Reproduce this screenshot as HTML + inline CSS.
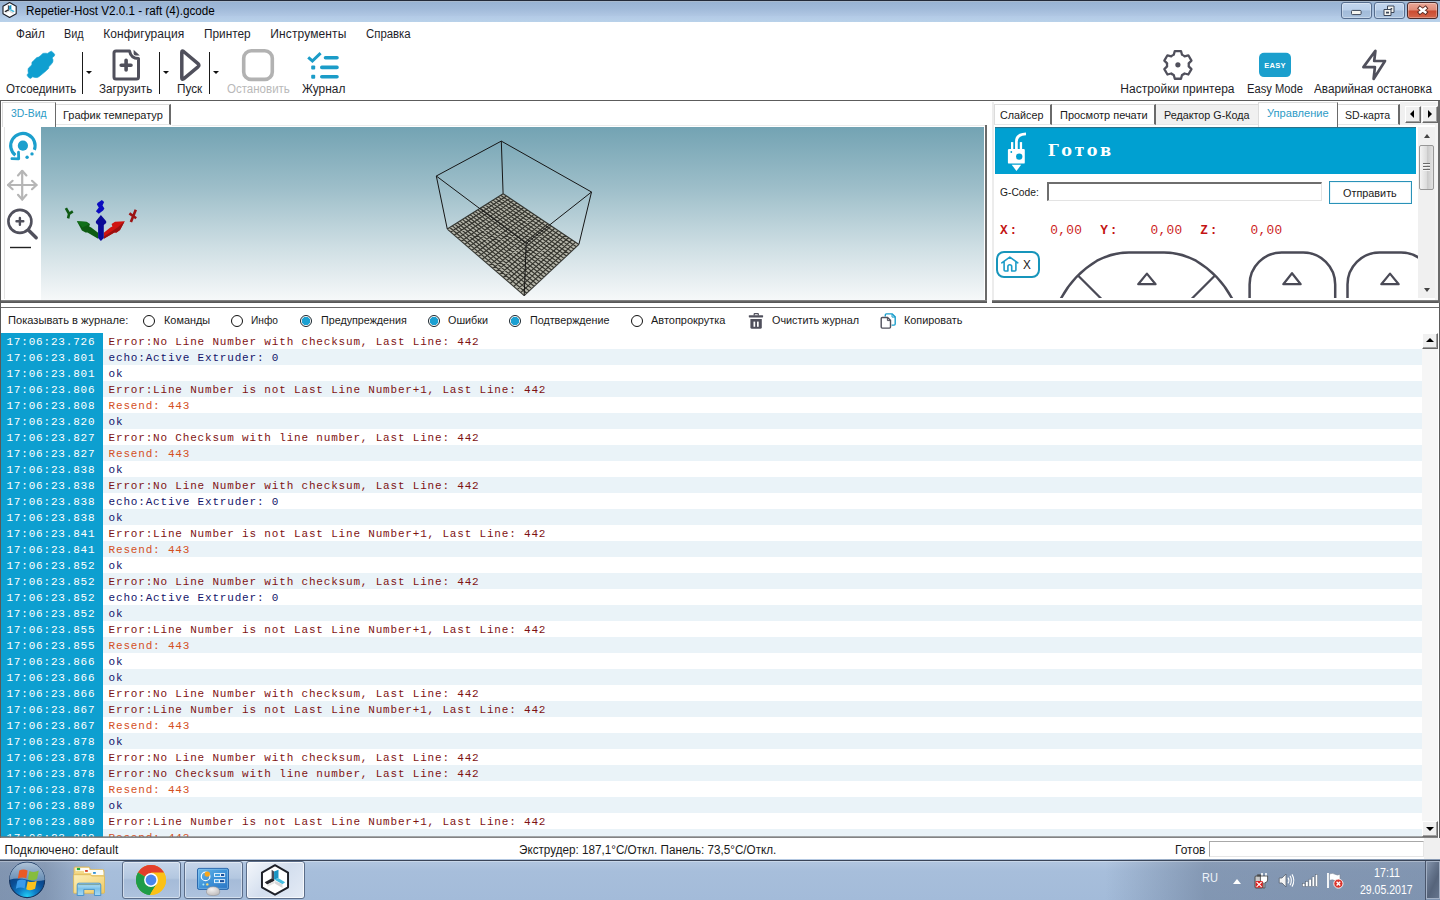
<!DOCTYPE html>
<html lang="ru"><head><meta charset="utf-8"><title>Repetier-Host V2.0.1 - raft (4).gcode</title>
<style>
*{box-sizing:border-box;margin:0;padding:0}
html,body{width:1440px;height:900px;overflow:hidden;background:#fff}
body{position:relative;font-family:"Liberation Sans",sans-serif;font-size:12px;color:#1e1e28}
.a{position:absolute;white-space:nowrap}
svg{position:absolute;overflow:visible}
.fs{font-family:"Liberation Sans",sans-serif}.fm{font-family:"Liberation Mono",monospace}.fd{font-family:"DejaVu Serif","Liberation Serif",serif}
.sx{transform-origin:0 0}
.sep{width:1px;top:52px;height:42px;background:#1a1a1a}
.dd{width:0;height:0;border:3px solid transparent;border-top:3px solid #111;border-bottom:0;top:71px}
.tab{top:104px;height:22px;background:#fff;border:1px solid #e3e3e3;border-right:2px solid #696969;border-bottom:0;box-shadow:inset -1px 0 0 #a0a0a0}
.rad{width:12px;height:12px;border-radius:50%;border:1.6px solid #111;background:#fff;top:315px}
.rad.on{border:1.3px solid #18242c;background:radial-gradient(circle,#1ba0d2 0 3.9px,#fff 4.5px)}
#log{left:1px;top:333px;width:1421px;height:504px;overflow:hidden;font:11px/16px "Liberation Mono",monospace;letter-spacing:.817px;background:repeating-linear-gradient(#fff 0 16px,#eaf3f8 16px 32px)}
#log .tc{left:0;top:0;width:102px;height:504px;background:#0d9fd0}
#log p{position:relative;height:16px;padding-left:107.6px;white-space:pre;line-height:18.1px}
#log p i{position:absolute;left:5.4px;top:0;font-style:normal;color:#fff}
.e{color:#7e1212}.n{color:#14146a}.r{color:#d4501e}
</style></head><body>
<!-- window chrome -->
<div class="a" style="left:0;top:0;width:1440px;height:22px;background:linear-gradient(#98b3d3 2px,#a1bad9 40%,#b0c7e3 72%,#b3cae6 74%,#b9d2ea)"></div>
<div class="a" style="left:0;top:0;width:1440px;height:1px;background:#232a38"></div><div class="a" style="left:0;top:1px;width:1440px;height:1px;background:#a9bace"></div>
<div class="a" style="left:0;top:100px;width:1px;height:738px;background:#5a5a5a"></div>
<div class="a" style="left:1439px;top:100px;width:1px;height:738px;background:#5a5a5a"></div>
<!-- caption buttons -->
<div class="a" style="left:1341px;top:2px;width:31px;height:17px;border:1px solid #566d8e;border-radius:3px;background:linear-gradient(#c3d6ee,#b9cfea 48%,#a2bbd9 52%,#abc3df);box-shadow:inset 0 0 0 1px rgba(255,255,255,.35)"></div>
<div class="a" style="left:1374px;top:2px;width:31px;height:17px;border:1px solid #566d8e;border-radius:3px;background:linear-gradient(#c3d6ee,#b9cfea 48%,#a2bbd9 52%,#abc3df);box-shadow:inset 0 0 0 1px rgba(255,255,255,.35)"></div>
<div class="a" style="left:1407px;top:2px;width:31px;height:17px;border:1px solid #4a2a2a;border-radius:3px;background:linear-gradient(#eba898,#e08a76 48%,#cb4a30 52%,#d4674c);box-shadow:inset 0 0 0 1px rgba(255,255,255,.3)"></div>
<svg style="left:1340px;top:0" width="100" height="22" viewBox="1340 0 100 22">
<rect x="1351.500" y="10.400" width="9.600" height="4.200" rx="1" fill="#f4f4f0" stroke="#3c4658" stroke-width="1"/>
<g fill="#f4f4f0" stroke="#3c4658" stroke-width="1"><path d="M1387.500 6 H1394 V12.500 H1387.500Z"/><path d="M1384 9.500 H1391 V15.500 H1384Z"/></g>
<rect x="1386" y="11.700" width="3" height="1.800" fill="#3c4658"/><rect x="1390.600" y="8" width="1.600" height="1.600" fill="#3c4658"/>
<path d="M1418.300 6.800 L1427.100 13.700 M1427.100 6.800 L1418.300 13.700" stroke="#5a2a22" stroke-width="4.200" stroke-linecap="butt"/>
<path d="M1419.100 7.400 L1426.300 13.100 M1426.300 7.400 L1419.100 13.100" stroke="#fff" stroke-width="2.500" stroke-linecap="butt"/>
</svg>
<!-- app icon -->
<svg style="left:2.300px;top:1.800px" width="15.2" height="16.15" viewBox="-16 -17 32 34">
<path d="M0 -15.700 L13.900 -7.850 V7.850 L0 15.700 L-13.900 7.850 V-7.850Z" fill="#fff" stroke="#1e2028" stroke-width="2.400" stroke-linejoin="round"/>
<path d="M-3.600 -10.800 L-1 -9 V-0.400 L-3.600 -1.700Z" fill="#4a4a58"/>
<path d="M-1 -9 L3.700 -10.800 V-1.700 L-1 -0.400Z" fill="#1894c4"/>
<path d="M-11 2.500 L-3.200 -1.700 L-0.800 -0.400 V1 L-8.300 4.800Z" fill="#26262c"/>
<path d="M-0.800 -0.400 L3.700 -1.700 L10.800 2.500 L7.900 4.500Z" fill="#45bde0"/>
<path d="M-8.300 4.800 L-0.800 1 L-0.100 3.200 L-7.900 7.200Z" fill="#e4e4e4"/>
<path d="M0.100 1 L7.900 4.500 L8.100 8.500 L0.100 4.100Z" fill="#d6d6d8"/>
</svg>

<!-- toolbar -->
<div class="a sep" style="left:82px"></div><div class="a dd" style="left:86px"></div>
<div class="a sep" style="left:159px"></div><div class="a dd" style="left:163px"></div>
<div class="a sep" style="left:209px"></div><div class="a dd" style="left:213px"></div>
<!-- toolbar icons -->
<svg style="left:0;top:0" width="1440" height="320" viewBox="0 0 1440 320">
<path d="M51.4 51.2 L53.6 53.0 L54.8 54.8 L54.0 56.4 L52.6 57.0 L52.4 58.4 L53.0 59.8 L52.8 62.0 L51.6 63.8 L50.0 65.6 L48.8 66.8 L48.6 68.4 L46.4 70.4 L44.8 72.0 L42.8 73.6 L40.8 75.2 L38.8 76.8 L37.2 77.6 L34.8 77.4 L32.4 76.8 L31.4 78.0 L30.2 78.4 L28.4 77.2 L27.2 75.4 L27.4 74.2 L28.4 73.2 L28.0 70.8 L28.2 68.4 L30.0 66.8 L31.8 64.8 L32.0 62.2 L34.0 60.2 L36.8 57.6 L38.8 57.0 L40.8 55.4 L42.8 53.4 L45.2 53.2 L47.6 53.4 L49.6 52.0Z" fill="#0f9fd0" stroke="#0f9fd0" stroke-width=".6" stroke-linejoin="round"/>
<g fill="none" stroke="#50505c" stroke-linejoin="round" stroke-linecap="round">
<path d="M129.500 51 H116 Q114 51 114 53 V77 Q114 79 116 79 H136.500 Q138.500 79 138.500 77 V58.500 Q131 58.500 129.500 51Z" stroke-width="3"/>
<path d="M121.200 65.200 H131 M126.100 60.300 V70" stroke-width="3.600"/>
<path d="M181.800 52.400 V78 Q181.800 80 183.600 78.800 L198 66.800 Q199.800 65.200 198 63.600 L183.600 51.500 Q181.800 50.300 181.800 52.400Z" stroke-width="3.500"/>
<path d="M1173.78 54.81 L1174.80 51.04 L1181.00 51.04 L1182.02 54.81 A10.9 10.9 0 0 1 1184.58 56.29 L1188.35 55.29 L1191.45 60.65 L1188.70 63.42 A10.9 10.9 0 0 1 1188.70 66.38 L1191.45 69.15 L1188.35 74.51 L1184.58 73.51 A10.9 10.9 0 0 1 1182.02 74.99 L1181.00 78.76 L1174.80 78.76 L1173.78 74.99 A10.9 10.9 0 0 1 1171.22 73.51 L1167.45 74.51 L1164.35 69.15 L1167.10 66.38 A10.9 10.9 0 0 1 1167.10 63.42 L1164.35 60.65 L1167.45 55.29 L1171.22 56.29 A10.9 10.9 0 0 1 1173.78 54.81Z" stroke-width="2.300"/>
<path d="M1375.400 50.800 L1363.400 67.100 H1374.900 L1373.600 79 L1385 61 H1374.200Z" stroke-width="2.700"/>
</g>
<path d="M133.600 49.700 L139.800 55.400 H135.600 Q133.600 55.400 133.600 53.400Z" fill="#50505c"/>
<circle cx="1177.900" cy="64.800" r="2.600" fill="#50505c"/>
<rect x="243.700" y="50.800" width="28.600" height="28.600" rx="7.500" fill="none" stroke="#b2b2b2" stroke-width="3.600"/>
<g fill="none" stroke="#1b9cc8" stroke-width="3.400">
<path d="M308.200 57.400 L312.400 61 L320.600 53.200" stroke-width="3"/>
<path d="M325.500 57.700 H337 M321.800 67.400 H337 M321.800 76.700 H337" stroke-linecap="round" stroke-width="3.600"/>
</g>
<rect x="311.200" y="65.400" width="4" height="4" rx="1" fill="#1b9cc8"/><rect x="311.200" y="74.700" width="4" height="4" rx="1" fill="#1b9cc8"/>
<rect x="1259" y="52.800" width="32" height="24.300" rx="5" fill="#1b9fcd"/>
<text x="1275" y="67.900" text-anchor="middle" font-family="Liberation Sans, sans-serif" font-weight="700" font-size="7.600" fill="#fff" letter-spacing="0.250">EASY</text>
</svg>

<!-- sunken frame lines -->
<div class="a" style="left:0;top:100px;width:1440px;height:1px;background:#5c5c5c"></div>
<!-- left tabs -->
<div class="a" style="left:2px;top:102px;width:54px;height:25px;border:1px solid #dcdcdc;border-bottom:0;border-right:1px solid #6a6a6a;background:#fff"></div>
<div class="a" style="left:56px;top:104px;width:115px;height:21px;border-top:1px solid #dcdcdc;border-right:2px solid #6a6a6a;border-bottom:1px solid #e6e6e6;background:#fff"></div>
<div class="a" style="left:4px;top:127px;width:1px;height:172px;background:#e4e4e4"></div>
<div class="a" style="left:172px;top:125px;width:814px;height:1px;background:#ececec"></div>
<!-- 3d view -->
<div class="a" style="left:41px;top:127px;width:943px;height:173px;background:linear-gradient(#73a3b3,#9dbec9 35%,#cfdfe4 70%,#f6f8f9)"></div>
<div class="a" style="left:985px;top:125px;width:2px;height:176px;background:#6a6a6a"></div>
<div class="a" style="left:1px;top:300px;width:986px;height:3px;background:linear-gradient(#909090,#5a5a5a 60%,#555)"></div>
<div class="a" style="left:992px;top:300px;width:448px;height:3px;background:linear-gradient(#909090,#5a5a5a 60%,#555)"></div>
<div class="a" style="left:1px;top:307px;width:1438px;height:1px;background:#6a6a6a"></div>
<!-- 3d view content -->
<svg style="left:0;top:0" width="1440" height="320" viewBox="0 0 1440 320">
<path d="M503.1 193.7 L578.9 244.4 L524.2 295.6 L447.3 229.1Z" fill="#b4b4a8"/>
<path d="M503.1 193.7 L578.9 244.4 M503.1 193.7 L447.3 229.1 M500.6 195.3 L576.4 246.7 M506.5 196.0 L450.8 232.1 M498.0 196.9 L573.9 249.1 M510.0 198.3 L454.3 235.1 M495.5 198.5 L571.4 251.4 M513.4 200.6 L457.8 238.2 M493.0 200.1 L569.0 253.7 M516.9 202.9 L461.3 241.2 M490.4 201.7 L566.5 256.0 M520.3 205.2 L464.8 244.2 M487.9 203.4 L564.0 258.4 M523.8 207.5 L468.3 247.2 M485.3 205.0 L561.5 260.7 M527.2 209.8 L471.8 250.3 M482.8 206.6 L559.0 263.0 M530.7 212.1 L475.3 253.3 M480.3 208.2 L556.5 265.3 M534.1 214.4 L478.8 256.3 M477.7 209.8 L554.0 267.7 M537.6 216.7 L482.3 259.3 M475.2 211.4 L551.5 270.0 M541.0 219.1 L485.8 262.4 M472.7 213.0 L549.1 272.3 M544.4 221.4 L489.2 265.4 M470.1 214.6 L546.6 274.7 M547.9 223.7 L492.7 268.4 M467.6 216.2 L544.1 277.0 M551.3 226.0 L496.2 271.4 M465.1 217.8 L541.6 279.3 M554.8 228.3 L499.7 274.4 M462.5 219.4 L539.1 281.6 M558.2 230.6 L503.2 277.5 M460.0 221.1 L536.6 284.0 M561.7 232.9 L506.7 280.5 M457.4 222.7 L534.1 286.3 M565.1 235.2 L510.2 283.5 M454.9 224.3 L531.7 288.6 M568.6 237.5 L513.7 286.5 M452.4 225.9 L529.2 290.9 M572.0 239.8 L517.2 289.6 M449.8 227.5 L526.7 293.3 M575.5 242.1 L520.7 292.6 M447.3 229.1 L524.2 295.6 M578.9 244.4 L524.2 295.6 " fill="none" stroke="#14140f" stroke-width="1.15" opacity=".8"/>
<path d="M501.3 141.1 L591.5 192.0 L526.2 243.4 L436.3 176.0Z M501.3 141.1 L503.1 193.7 M436.3 176.0 L447.3 229.1 M591.5 192.0 L578.9 244.4 M526.2 243.4 L524.2 295.6 " fill="none" stroke="#161616" stroke-width="1" stroke-linejoin="round"/>
<path d="M76.9 221.2 L86.6 221.8 L90.0 223.9 L89.2 226.6 L91.2 227.5 L98.1 232.8 L98.1 238.8 L87.5 232.5 L85.6 232.5 L81.9 230.6Z" fill="#0e5c12"/>
<path d="M76.9 221.2 L86.2 221.9 L89.1 224.2 L82.5 227.5Z" fill="#12701a"/>
<path d="M124.7 221.2 L115.0 221.8 L111.6 223.9 L112.4 226.6 L110.3 227.5 L103.8 232.8 L103.8 238.8 L114.4 232.5 L116.6 232.5 L120.0 230.0Z" fill="#d01410"/>
<path d="M120.0 230.0 L116.6 232.5 L114.4 232.5 L103.8 238.8 L103.8 236.6 L117.5 227.5 L124.7 221.2Z" fill="#9c1010"/>
<path d="M100.9 215.0 L106.2 221.2 L106.2 223.1 L103.8 225.0 L103.8 238.1 L100.9 240.9 L98.1 238.1 L98.1 225.0 L95.9 223.1 L95.9 221.2Z" fill="#0a0a96"/>
<path d="M97.5 203.1 L101.9 200.0 L104.1 201.9 L102.5 205.6 L104.4 208.4 L103.1 210.6 L98.8 213.8 L95.9 211.2 L98.8 207.5 L96.9 204.4Z" fill="#0c0cc0"/>
<path d="M65.9 208.1 L69.1 213.8 L68.1 218.4 M72.8 211.4 L69.1 213.8" fill="none" stroke="#0f5a14" stroke-width="2.600"/>
<path d="M135.8 209.7 L130.9 221.9 M129.4 213.4 L136.2 218.2" fill="none" stroke="#9c1414" stroke-width="2.600"/>
<path d="M34.36 149.87 A12.2 12.2 0 1 0 15.39 155.31" fill="none" stroke="#1b9fcd" stroke-width="3.200" stroke-linecap="butt"/>
<path d="M18.500 152.200 L18.700 158.900 L11.900 158.700" fill="none" stroke="#1b9fcd" stroke-width="2.800" stroke-linecap="round" stroke-linejoin="round"/>
<circle cx="22.900" cy="145.700" r="5.100" fill="#1b9fcd"/>
<circle cx="32.0" cy="153.9" r="1.700" fill="#1b9fcd"/><circle cx="27.1" cy="157.2" r="1.700" fill="#1b9fcd"/>
<g fill="none" stroke="#b6b6b6" stroke-width="2.200" stroke-linecap="round" stroke-linejoin="round"><path d="M22.200 171 V199.400 M8.200 185 H36.400"/><path d="M18 175.400 L22.200 170.800 L26.400 175.400 M18 194.800 L22.200 199.600 L26.400 194.800 M12.600 180.800 L8 185 L12.600 189.200 M32 180.800 L36.600 185 L32 189.200"/></g>
<g fill="none" stroke="#50505c" stroke-linecap="round"><circle cx="19.900" cy="221.400" r="11.500" stroke-width="2.600"/><path d="M28.600 230.200 L36.200 237.800" stroke-width="3.400"/><path d="M16.500 221.300 H23.300 M19.900 217.900 V224.700" stroke-width="2.400"/></g>
<rect x="10" y="246.800" width="21" height="1.400" fill="#222"/>
</svg>

<!-- right panel frame -->
<div class="a" style="left:992px;top:102px;width:2px;height:198px;background:#ececec"></div>
<div class="a" style="left:1435px;top:102px;width:3px;height:198px;background:#f4f4f4"></div><div class="a" style="left:1438px;top:101px;width:2px;height:202px;background:#6a6a6a"></div>
<!-- right tabs -->
<div class="a" style="left:994px;top:104px;width:58px;height:21px;border:1px solid #dcdcdc;border-right:2px solid #6a6a6a;border-bottom:1px solid #e6e6e6;background:#fff"></div>
<div class="a" style="left:1052px;top:104px;width:104px;height:21px;border-top:1px solid #dcdcdc;border-right:2px solid #6a6a6a;border-bottom:1px solid #e6e6e6;background:#fff"></div>
<div class="a" style="left:1156px;top:104px;width:102px;height:21px;border-top:1px solid #dcdcdc;border-bottom:1px solid #e6e6e6;background:#f0f0f0"></div>
<div class="a" style="left:1258px;top:102px;width:80px;height:25px;border:1px solid #dcdcdc;border-bottom:0;border-right:1px solid #6a6a6a;background:#fff"></div>
<div class="a" style="left:1338px;top:104px;width:62px;height:21px;border-top:1px solid #dcdcdc;border-right:2px solid #6a6a6a;border-bottom:1px solid #e6e6e6;background:#fff"></div>
<div class="a" style="left:1400px;top:102px;width:36px;height:23px;background:#f0f0f0"></div>
<!-- tab scroll buttons -->
<div class="a" style="left:1405px;top:106px;width:16px;height:17px;background:#f0f0f0;border:1px solid #fff;border-right:1px solid #696969;border-bottom:1px solid #696969;box-shadow:inset -1px -1px 0 #a0a0a0"></div>
<div class="a" style="left:1422px;top:106px;width:16px;height:17px;background:#f0f0f0;border:1px solid #fff;border-right:1px solid #696969;border-bottom:1px solid #696969;box-shadow:inset -1px -1px 0 #a0a0a0"></div>
<div class="a" style="left:1410px;top:110px;border:4px solid transparent;border-right:4px solid #000;border-left:0"></div>
<div class="a" style="left:1428px;top:110px;border:4px solid transparent;border-left:4px solid #000;border-right:0"></div>
<!-- blue header -->
<div class="a" style="left:995px;top:127px;width:421px;height:47px;background:#00a0d1;box-shadow:inset 1px 2px 1px -1px #2d6e86"></div>
<svg style="left:1000px;top:128px" width="32" height="46" viewBox="1000 128 32 46">
<rect x="1007.900" y="148.900" width="16.900" height="14.700" rx="1.200" fill="#fff"/>
<circle cx="1019.200" cy="156.600" r="3.200" fill="#00a0d1"/><circle cx="1011.300" cy="152" r=".9" fill="#00a0d1"/>
<path d="M1011.700 164.700 H1021.200 L1016.450 170.900Z" fill="#fff"/>
<rect x="1011" y="142.100" width="2.300" height="7" fill="#fff"/><rect x="1019.800" y="142.100" width="2.300" height="7" fill="#fff"/>
<path d="M1016.400 149 V141.500 Q1016.400 134.300 1026 133.900" fill="none" stroke="#fff" stroke-width="2.700"/>
</svg>
<!-- scrollbar -->
<div class="a" style="left:1418px;top:127px;width:17px;height:171px;background:#f0f0f0"></div>
<div class="a" style="left:1419px;top:145px;width:15px;height:45px;border:1px solid #979797;border-radius:2px;background:linear-gradient(90deg,#f4f4f4,#dcdcdc 50%,#c8c8c8 52%,#e2e2e2)"></div>
<div class="a" style="left:1423px;top:163px;width:7px;height:9px;background:repeating-linear-gradient(#6a6a6a 0 1px,#f4f4f4 1px 2px,transparent 2px 3px)"></div>
<div class="a" style="left:1423.500px;top:134px;border:3.800px solid transparent;border-bottom:4px solid #444;border-top:0"></div>
<div class="a" style="left:1423.500px;top:288px;border:3.800px solid transparent;border-top:4px solid #444;border-bottom:0"></div>
<!-- gcode row -->
<div class="a" style="left:1047px;top:182px;width:275px;height:19px;background:#fff;border:1px solid #e3e3e3;border-top:2px solid #6e6e6e;border-left:2px solid #6e6e6e"></div>
<div class="a" style="left:1329px;top:181px;width:83px;height:23px;background:#fff;border:1px solid #2a92b8;box-shadow:inset 0 0 0 1px #e8f6fb"></div>
<!-- home x button -->
<div class="a" style="left:996px;top:251px;width:44px;height:27px;border:2px solid #1795bb;border-radius:8px;background:#fff"></div>
<svg style="left:1000px;top:255px" width="20" height="18" viewBox="1000 255 20 18"><path d="M1001.800 262.900 L1009.800 257.100 L1017.800 262.900 M1004.100 261.800 V270 Q1004.100 271 1005.100 271 H1007.900 V266.600 Q1007.900 264.700 1009.800 264.700 Q1011.700 264.700 1011.700 266.600 V271 H1014.900 Q1015.900 271 1015.900 270 V261.800" fill="none" stroke="#1b9cc8" stroke-width="1.600" stroke-linejoin="round" stroke-linecap="round"/></svg>
<!-- jog shapes (clipped) -->
<svg style="left:995px;top:245px;overflow:hidden" width="423" height="53" viewBox="995 245 423 53"><g fill="none" stroke="#4a4a56" stroke-width="2.500" stroke-linejoin="round">
<path d="M1060.2 300 A96.9 96.9 0 0 1 1097.0 260.7 Q1112.500 252.600 1129 252.600 H1164 Q1180.500 252.600 1196.0 260.7 A96.9 96.9 0 0 1 1232.8 300"/>
<path d="M1078.0 275.5 L1108.0 305.5 M1215.0 275.5 L1185.0 305.5" stroke-width="2.200"/>
<path d="M1146.900 273.600 L1155.600 284.200 H1138.200 Z" stroke-width="2.200"/>
<path d="M1249.600 300 V284.500 A32 32 0 0 1 1281.600 252.500 H1303.200 A32 32 0 0 1 1335.200 284.500 V300"/>
<path d="M1292 273.200 L1300.700 284.200 H1283.300 Z" stroke-width="2.200"/>
<path d="M1347.500 300 V284.500 A32 32 0 0 1 1379.500 252.500 H1401.100 A32 32 0 0 1 1433.100 284.500 V300"/>
<path d="M1390 273.600 L1398.700 284.200 H1381.300 Z" stroke-width="2.200"/>
</g></svg>

<!-- log panel -->
<div class="a rad" style="left:143.0px"></div>
<div class="a rad" style="left:231.0px"></div>
<div class="a rad on" style="left:300.0px"></div>
<div class="a rad on" style="left:428.0px"></div>
<div class="a rad on" style="left:509.0px"></div>
<div class="a rad" style="left:630.7px"></div>
<div id="log" class="a"><div class="a tc"></div>
<p class="e"><i>17:06:23.726</i>Error:No Line Number with checksum, Last Line: 442</p>
<p class="n"><i>17:06:23.801</i>echo:Active Extruder: 0</p>
<p class="n"><i>17:06:23.801</i>ok</p>
<p class="e"><i>17:06:23.806</i>Error:Line Number is not Last Line Number+1, Last Line: 442</p>
<p class="r"><i>17:06:23.808</i>Resend: 443</p>
<p class="n"><i>17:06:23.820</i>ok</p>
<p class="e"><i>17:06:23.827</i>Error:No Checksum with line number, Last Line: 442</p>
<p class="r"><i>17:06:23.827</i>Resend: 443</p>
<p class="n"><i>17:06:23.838</i>ok</p>
<p class="e"><i>17:06:23.838</i>Error:No Line Number with checksum, Last Line: 442</p>
<p class="n"><i>17:06:23.838</i>echo:Active Extruder: 0</p>
<p class="n"><i>17:06:23.838</i>ok</p>
<p class="e"><i>17:06:23.841</i>Error:Line Number is not Last Line Number+1, Last Line: 442</p>
<p class="r"><i>17:06:23.841</i>Resend: 443</p>
<p class="n"><i>17:06:23.852</i>ok</p>
<p class="e"><i>17:06:23.852</i>Error:No Line Number with checksum, Last Line: 442</p>
<p class="n"><i>17:06:23.852</i>echo:Active Extruder: 0</p>
<p class="n"><i>17:06:23.852</i>ok</p>
<p class="e"><i>17:06:23.855</i>Error:Line Number is not Last Line Number+1, Last Line: 442</p>
<p class="r"><i>17:06:23.855</i>Resend: 443</p>
<p class="n"><i>17:06:23.866</i>ok</p>
<p class="n"><i>17:06:23.866</i>ok</p>
<p class="e"><i>17:06:23.866</i>Error:No Line Number with checksum, Last Line: 442</p>
<p class="e"><i>17:06:23.867</i>Error:Line Number is not Last Line Number+1, Last Line: 442</p>
<p class="r"><i>17:06:23.867</i>Resend: 443</p>
<p class="n"><i>17:06:23.878</i>ok</p>
<p class="e"><i>17:06:23.878</i>Error:No Line Number with checksum, Last Line: 442</p>
<p class="e"><i>17:06:23.878</i>Error:No Checksum with line number, Last Line: 442</p>
<p class="r"><i>17:06:23.878</i>Resend: 443</p>
<p class="n"><i>17:06:23.889</i>ok</p>
<p class="e"><i>17:06:23.889</i>Error:Line Number is not Last Line Number+1, Last Line: 442</p>
<p class="r"><i>17:06:23.889</i>Resend: 443</p>
</div>
<div class="a" style="left:1422px;top:333px;width:16px;height:504px;background:#f6f6f6"></div>
<div class="a" style="left:1422px;top:333px;width:16px;height:16px;background:#f0f0f0;border:1px solid #fff;border-right:1px solid #696969;border-bottom:1px solid #696969;box-shadow:inset -1px -1px 0 #a0a0a0"></div>
<div class="a" style="left:1426px;top:338px;border:4px solid transparent;border-bottom:4px solid #000;border-top:0"></div>
<div class="a" style="left:1422px;top:821px;width:16px;height:16px;background:#f0f0f0;border:1px solid #fff;border-right:1px solid #696969;border-bottom:1px solid #696969;box-shadow:inset -1px -1px 0 #a0a0a0"></div>
<div class="a" style="left:1426px;top:827px;border:4px solid transparent;border-top:4px solid #000;border-bottom:0"></div>
<svg style="left:745px;top:310px" width="160" height="22" viewBox="745 310 160 22">
<g fill="#50505c"><rect x="748.800" y="315.200" width="14.300" height="2.200" rx=".6"/><path d="M753.600 315.400 V314 Q753.600 313 754.600 313 H757.900 Q758.900 313 758.900 314 V315.400 H757.700 V314.200 H754.800 V315.400Z"/>
<path d="M750.400 318.900 H761.800 V327.200 Q761.800 328.800 760.200 328.800 H752 Q750.400 328.800 750.400 327.200Z"/></g>
<rect x="753.500" y="321.600" width="1.700" height="5.200" fill="#fff"/><rect x="757" y="321.600" width="1.700" height="5.200" fill="#fff"/>
<path d="M885.300 316.500 V315 Q885.300 313.900 886.400 313.900 H892.200 L895.200 316.900 V324 Q895.200 325.100 894.100 325.100 H891.600" fill="none" stroke="#1b9fcd" stroke-width="1.400"/>
<path d="M892 314 V317.100 H895.100" fill="none" stroke="#1b9fcd" stroke-width="1"/>
<path d="M881.200 318.600 Q881.200 317.500 882.300 317.500 H887.600 L890.500 320.400 V327 Q890.500 328.100 889.400 328.100 H882.300 Q881.200 328.100 881.200 327Z" fill="#fff" stroke="#50505c" stroke-width="1.400"/>
<path d="M887.400 317.600 V320.600 H890.400" fill="none" stroke="#50505c" stroke-width="1"/>
</svg>

<!-- status bar -->
<div class="a" style="left:0;top:836px;width:1438px;height:2px;background:linear-gradient(rgba(110,110,110,.45),#707070)"></div>
<div class="a" style="left:1209px;top:841px;width:215px;height:16px;background:#fff;border:1px solid #e6e6e6;border-top:1px solid #a8a8a8;border-left:1px solid #a8a8a8"></div>
<div class="a" style="left:1424px;top:838px;width:16px;height:22px;background:#f0f0f0"></div>

<!-- taskbar -->
<div class="a" style="left:0;top:859px;width:1440px;height:41px;background:linear-gradient(90deg,rgba(83,99,125,.45) 0,rgba(83,99,125,.42) 45px,rgba(83,99,125,0) 105px,rgba(83,99,125,0) 1105px,rgba(83,99,125,.42) 1205px,rgba(83,99,125,.45) 1440px),linear-gradient(#b4c8e1,#a7bedb 30%,#a3bbd9)"></div>
<div class="a" style="left:0;top:860px;width:1440px;height:1px;background:#3a4558"></div><div class="a" style="left:0;top:861px;width:1425px;height:1px;background:rgba(255,255,255,.3)"></div>
<!-- start orb -->
<svg style="left:7px;top:860px" width="40" height="40" viewBox="0 0 40 40">
<defs><radialGradient id="og" cx=".5" cy=".98" r=".75"><stop offset="0" stop-color="#22d2f8"/><stop offset=".35" stop-color="#0f7fc8"/><stop offset=".7" stop-color="#0b4f96"/><stop offset="1" stop-color="#0c3f7e"/></radialGradient>
<linearGradient id="og2" x1="0" y1="0" x2="0" y2="1"><stop offset="0" stop-color="#c4d3e2" stop-opacity=".95"/><stop offset="1" stop-color="#7da0c2" stop-opacity=".8"/></linearGradient>
<clipPath id="oc"><circle cx="20.100" cy="20" r="17.600"/></clipPath></defs>
<circle cx="20.100" cy="20" r="18.300" fill="#b9cde4" opacity=".7"/>
<circle cx="20.100" cy="20" r="17.600" fill="url(#og)" stroke="#16345e" stroke-width="1.100"/>
<path d="M0 0 H40 V19.500 Q30 22.500 20 19.800 T0 20.500Z" fill="url(#og2)" clip-path="url(#oc)"/>
<path d="M12.300 10.600 Q16 8.600 20.600 10.400 L19.300 18.300 Q15 16.600 10.800 18.800Z" fill="#ea5a24"/>
<path d="M22.400 11 Q27 13 31.800 10.600 L30 18.900 Q25.400 21.200 21 19.200Z" fill="#86bd3c"/>
<path d="M10.400 20.800 Q14.600 18.600 19 20.400 L17.600 28.400 Q13.400 26.600 8.800 28.800Z" fill="#3a9ae8"/>
<path d="M20.700 21.200 Q25 23.100 29.700 20.800 L28.100 28.800 Q23.400 31.300 19.200 29.300Z" fill="#fbc21e"/>
</svg>
<!-- explorer -->
<svg style="left:70px;top:864px" width="38" height="34" viewBox="70 864 38 34">
<defs><linearGradient id="fg" x1="0" y1="0" x2="1" y2="1"><stop offset="0" stop-color="#fbeeb8"/><stop offset=".55" stop-color="#f6dc8c"/><stop offset="1" stop-color="#efc862"/></linearGradient>
<linearGradient id="sg" x1="0" y1="0" x2="0" y2="1"><stop offset="0" stop-color="#bfe6f8"/><stop offset=".45" stop-color="#7cc2ea"/><stop offset="1" stop-color="#a6daf5"/></linearGradient></defs>
<path d="M74 868.200 Q74 867 75.200 867 H88.600 Q89.600 867 89.800 868 L90.200 869.600 H102.800 Q104 869.600 104 870.800 V880 H74Z" fill="#f3d98a" stroke="#d9b354" stroke-width=".8"/>
<rect x="75.600" y="867.900" width="13.600" height="3" fill="#fdfdf6"/><rect x="76.800" y="867.900" width="3.300" height="2.200" fill="#22a83a"/>
<rect x="84" y="869.900" width="19" height="3" fill="#fdfdf6"/><rect x="85.100" y="870" width="2.700" height="1.900" fill="#d8432a"/>
<path d="M74 873 H90 L91.400 875 H104 V880 H74Z" fill="#f1d27c"/>
<rect x="91.400" y="871.600" width="12" height="3.400" fill="#fdfdf6"/><rect x="93.100" y="872" width="2.700" height="1.800" fill="#2c8fd6"/>
<path d="M73.600 875.600 Q73.600 874.700 74.500 874.700 H90.400 L91.600 876 H103.600 Q104.500 876 104.500 876.900 V892.400 Q104.500 893.300 103.600 893.300 H74.500 Q73.600 893.300 73.600 892.400Z" fill="url(#fg)" stroke="#dcb650" stroke-width=".8"/>
<path d="M77.200 895.500 V885 Q77.200 883.200 79 883.200 H99 Q100.800 883.200 100.800 885 V895.500 H94.400 V889.400 H83.800 V895.500Z" fill="url(#sg)" stroke="#3f8fcc" stroke-width=".9" stroke-linejoin="round"/>
<path d="M78.200 884.600 H99.800" stroke="#5a7f6a" stroke-width=".9" opacity=".7"/>
</svg>
<!-- task buttons -->
<div class="a" style="left:122px;top:861px;width:59px;height:38px;border:1px solid #5b6d89;border-radius:3px;background:linear-gradient(#c7d6ea,#b3c7e0 45%,#a5bbd8 50%,#aec3de);box-shadow:inset 0 0 0 1px rgba(255,255,255,.45)"></div>
<div class="a" style="left:184px;top:861px;width:59px;height:38px;border:1px solid #5b6d89;border-radius:3px;background:linear-gradient(#c7d6ea,#b3c7e0 45%,#a5bbd8 50%,#aec3de);box-shadow:inset 0 0 0 1px rgba(255,255,255,.45)"></div>
<div class="a" style="left:246px;top:861px;width:59px;height:38px;border:1px solid #5b6d89;border-radius:3px;background:linear-gradient(135deg,#f4f7fb,#d3deee 50%,#e4ebf5);box-shadow:inset 0 0 0 1px rgba(255,255,255,.7)"></div>
<!-- chrome -->
<svg style="left:136px;top:865px" width="30" height="30" viewBox="-15 -15 30 30">
<circle r="15" fill="#fbc116"/>
<path d="M0 0 L-12.99 -7.5 A15 15 0 0 1 12.99 -7.5Z" fill="#e33e2b"/>
<path d="M-12.99 -7.5 A15 15 0 0 1 12.99 -7.5 L0 -7.5Z" fill="#e33e2b"/>
<path d="M0 0 L-12.99 -7.5 A15 15 0 0 0 0 15 Z" fill="#1e9c48"/>
<path d="M-12.99 -7.5 A15 15 0 0 0 -1.2 14.95 L5.9 3.4 L-6 3.4Z" fill="#1e9c48"/>
<path d="M12.99 -7.5 H0 L5.9 3.4 L-1.2 14.95 A15 15 0 0 0 12.99 -7.5Z" fill="#fbc116"/>
<circle r="6.9" fill="#fff"/><circle r="5.4" fill="#4a86ec"/>
</svg>
<!-- control panel -->
<svg style="left:195px;top:866px" width="36" height="32" viewBox="195 866 36 32">
<defs><linearGradient id="cg" x1="0" y1="0" x2="1" y2="1"><stop offset="0" stop-color="#6cb9ea"/><stop offset=".5" stop-color="#3f93d8"/><stop offset="1" stop-color="#2a74c4"/></linearGradient>
<radialGradient id="dg" cx=".4" cy=".3" r=".8"><stop offset="0" stop-color="#f4f2f2"/><stop offset="1" stop-color="#b9b6b6"/></radialGradient></defs>
<rect x="197.500" y="868.400" width="31" height="21" rx="1.600" fill="url(#cg)" stroke="#2a69ae" stroke-width="1"/>
<rect x="198.500" y="869.400" width="29" height="19" rx="1" fill="none" stroke="#9fd2f4" stroke-width=".6" opacity=".7"/>
<circle cx="205.600" cy="876.400" r="4.300" fill="none" stroke="#f0f8ff" stroke-width="1.200"/>
<circle cx="207.300" cy="874.100" r="2.700" fill="#f9a61c"/>
<rect x="214" y="873.100" width="11.100" height="3.800" fill="#e6f3fd"/><rect x="215" y="874" width="5" height="2" fill="#3c9be0"/><rect x="221" y="874" width="3.200" height="2" fill="#184f9c"/>
<rect x="214" y="879.200" width="11.100" height="3.900" fill="#e6f3fd"/><rect x="215" y="880.100" width="3.800" height="2.100" fill="#3c9be0"/><rect x="220" y="880.100" width="4.200" height="2.100" fill="#184f9c"/>
<circle cx="203.400" cy="884.400" r="1" fill="#a8ecff"/><circle cx="207.300" cy="884.400" r="1.200" fill="#ffd86a"/>
<path d="M206.400 892 Q206.800 886.700 213.100 886.700 Q219.400 886.700 219.800 892 Q219.600 895.600 213.100 895.600 Q206.600 895.600 206.400 892Z" fill="url(#dg)" stroke="#8f8c8c" stroke-width=".5"/>
</svg>
<!-- repetier hex -->
<svg style="left:260px;top:863.900px" width="30" height="31.900" viewBox="-16 -17 32 34">
<path d="M0 -15.700 L13.900 -7.850 V7.850 L0 15.700 L-13.900 7.850 V-7.850Z" fill="#fff" stroke="#1e2028" stroke-width="2.100" stroke-linejoin="round"/>
<path d="M-3.600 -10.800 L-1 -9 V-0.400 L-3.600 -1.700Z" fill="#4a4a58"/>
<path d="M-1 -9 L3.700 -10.800 V-1.700 L-1 -0.400Z" fill="#1894c4"/>
<path d="M-11 2.500 L-3.200 -1.700 L-0.800 -0.400 V1 L-8.300 4.800Z" fill="#26262c"/>
<path d="M-0.800 -0.400 L3.700 -1.700 L10.800 2.500 L7.900 4.500Z" fill="#45bde0"/>
<path d="M-8.300 4.800 L-0.800 1 L-0.100 3.200 L-7.900 7.200Z" fill="#e4e4e4"/>
<path d="M0.100 1 L7.900 4.500 L8.100 8.500 L0.100 4.100Z" fill="#d6d6d8"/>
</svg>
<!-- tray -->
<div class="a" style="left:1233px;top:879px;border:4.5px solid transparent;border-bottom:5px solid #fff;border-top:0"></div>
<svg style="left:1254px;top:872px" width="16" height="17" viewBox="0 0 16 17">
<rect x="1" y="4" width="8" height="12" rx="1" fill="#c8c8c8" stroke="#4a4a4a" stroke-width="1"/><rect x="3.2" y="2.4" width="3.6" height="2" fill="#4a4a4a"/>
<path d="M8 1 V4 M12 1 V4" stroke="#fff" stroke-width="1.6"/><path d="M6.4 4 H13.6 V8 Q13.6 10.5 10.8 10.8 V16 H9.2 V10.8 Q6.4 10.5 6.4 8Z" fill="#fff" stroke="#3c3c3c" stroke-width=".8"/>
<rect x="1.6" y="9" width="7" height="6.6" fill="#e01b1b"/><path d="M2.6 10 L7.6 14.8 M7.6 10 L2.6 14.8" stroke="#fff" stroke-width="1.1"/>
</svg>
<svg style="left:1278px;top:872px" width="17" height="17" viewBox="0 0 17 17">
<path d="M1.2 6 H4 L8 2 V15 L4 11 H1.2Z" fill="#f4f4f4" stroke="#5a6472" stroke-width=".8"/>
<path d="M10 5.6 Q11.8 8.500 10 11.4 M12 3.800 Q14.800 8.500 12 13.200 M14 2.400 Q17.600 8.500 14 14.600" fill="none" stroke="#fff" stroke-width="1.1"/>
</svg>
<svg style="left:1302px;top:874px" width="16" height="13" viewBox="0 0 16 13">
<g fill="#fff" stroke="#5a6472" stroke-width=".5"><rect x=".5" y="9.500" width="2.400" height="3"/><rect x="3.700" y="7.500" width="2.400" height="5"/><rect x="6.900" y="5.200" width="2.400" height="7.300"/><rect x="10.100" y="2.800" width="2.400" height="9.700"/><rect x="13.300" y=".5" width="2.400" height="12"/></g>
</svg>
<svg style="left:1326px;top:872px" width="18" height="17" viewBox="0 0 18 17">
<path d="M2 1 V16" stroke="#fff" stroke-width="1.8"/><path d="M3.400 2 Q6.500 .6 9 2.200 T14 2.200 V8.600 Q11.500 10 9 8.600 T3.400 8.400Z" fill="#fff" stroke="#7a8596" stroke-width=".6"/>
<circle cx="12.400" cy="11.600" r="4.600" fill="#d9322b" stroke="#fff" stroke-width=".9"/><path d="M10.600 9.800 L14.200 13.400 M14.200 9.800 L10.600 13.400" stroke="#fff" stroke-width="1.400"/>
</svg>
<!-- show desktop -->
<div class="a" style="left:1425px;top:861px;width:1px;height:39px;background:#4a566c"></div>
<div class="a" style="left:1426px;top:861px;width:14px;height:38px;border:1px solid #a3b0c4;background:linear-gradient(115deg,#8494ab 0,#66758d 35%,#56647b 60%,#65748c)"></div>

<span class="a fs sx" style="left:26.0px;top:4.8px;font-size:12px;line-height:12px;color:#000;transform:scaleX(0.9722);">Repetier-Host V2.0.1 - raft (4).gcode</span>
<span class="a fs sx" style="left:16.0px;top:28.1px;font-size:12px;line-height:12px;color:#1e1e2a;transform:scaleX(0.9729);">Файл</span>
<span class="a fs sx" style="left:64.3px;top:28.1px;font-size:12px;line-height:12px;color:#1e1e2a;transform:scaleX(0.9075);">Вид</span>
<span class="a fs" style="left:103.3px;top:28.1px;font-size:12px;line-height:12px;color:#1e1e2a;letter-spacing:0.03px">Конфигурация</span>
<span class="a fs sx" style="left:203.7px;top:28.1px;font-size:12px;line-height:12px;color:#1e1e2a;transform:scaleX(0.9861);">Принтер</span>
<span class="a fs" style="left:270.3px;top:28.1px;font-size:12px;line-height:12px;color:#1e1e2a;letter-spacing:0.12px">Инструменты</span>
<span class="a fs sx" style="left:365.7px;top:28.1px;font-size:12px;line-height:12px;color:#1e1e2a;transform:scaleX(0.9494);">Справка</span>
<span class="a fs sx" style="left:5.5px;top:83.0px;font-size:12px;line-height:12px;color:#1e1e28;transform:scaleX(0.9662);">Отсоединить</span>
<span class="a fs sx" style="left:99.0px;top:83.0px;font-size:12px;line-height:12px;color:#1e1e28;transform:scaleX(0.9718);">Загрузить</span>
<span class="a fs sx" style="left:176.9px;top:83.0px;font-size:12px;line-height:12px;color:#1e1e28;transform:scaleX(0.9815);">Пуск</span>
<span class="a fs sx" style="left:226.9px;top:83.0px;font-size:12px;line-height:12px;color:#b9b9b9;transform:scaleX(0.9595);">Остановить</span>
<span class="a fs sx" style="left:301.5px;top:83.0px;font-size:12px;line-height:12px;color:#1e1e28;transform:scaleX(0.9889);">Журнал</span>
<span class="a fs" style="left:1120.3px;top:83.0px;font-size:12px;line-height:12px;color:#1e1e28;letter-spacing:0.01px">Настройки принтера</span>
<span class="a fs sx" style="left:1246.8px;top:83.0px;font-size:12px;line-height:12px;color:#1e1e28;transform:scaleX(0.9312);">Easy Mode</span>
<span class="a fs sx" style="left:1314.4px;top:83.0px;font-size:12px;line-height:12px;color:#1e1e28;transform:scaleX(0.9774);">Аварийная остановка</span>
<span class="a fs sx" style="left:11.2px;top:107.2px;font-size:11.6px;line-height:11.6px;color:#2d9bc6;transform:scaleX(0.8975);">3D-Вид</span>
<span class="a fs sx" style="left:63.1px;top:109.0px;font-size:11.6px;line-height:11.6px;color:#1a1a1a;transform:scaleX(0.9475);">График температур</span>
<span class="a fs sx" style="left:1000.3px;top:109.0px;font-size:11.6px;line-height:11.6px;color:#1a1a1a;transform:scaleX(0.9286);">Слайсер</span>
<span class="a fs sx" style="left:1060.0px;top:109.0px;font-size:11.6px;line-height:11.6px;color:#1a1a1a;transform:scaleX(0.9473);">Просмотр печати</span>
<span class="a fs sx" style="left:1164.2px;top:109.0px;font-size:11.6px;line-height:11.6px;color:#1a1a1a;transform:scaleX(0.9286);">Редактор G-Кода</span>
<span class="a fs sx" style="left:1267.0px;top:107.2px;font-size:11.6px;line-height:11.6px;color:#2d9bc6;transform:scaleX(0.9562);">Управление</span>
<span class="a fs sx" style="left:1345.3px;top:109.0px;font-size:11.6px;line-height:11.6px;color:#1a1a1a;transform:scaleX(0.9119);">SD-карта</span>
<span class="a fd" style="left:1047.8px;top:142.6px;font-size:16px;line-height:16px;font-weight:700;color:#fff;letter-spacing:2.47px">Готов</span>
<span class="a fs sx" style="left:999.7px;top:186.4px;font-size:11.6px;line-height:11.6px;color:#1a1a1a;transform:scaleX(0.8854);">G-Code:</span>
<span class="a fs sx" style="left:1342.5px;top:186.9px;font-size:11.6px;line-height:11.6px;color:#1a1a1a;transform:scaleX(0.9348);">Отправить</span>
<span class="a fm" style="left:1000.0px;top:224.5px;font-size:12.8px;line-height:12.8px;font-weight:700;color:#c41414;letter-spacing:1.82px">X:</span>
<span class="a fm" style="left:1050.3px;top:224.5px;font-size:12.8px;line-height:12.8px;color:#cc2222;letter-spacing:0.32px">0,00</span>
<span class="a fm" style="left:1100.2px;top:224.5px;font-size:12.8px;line-height:12.8px;font-weight:700;color:#c41414;letter-spacing:1.82px">Y:</span>
<span class="a fm" style="left:1150.5px;top:224.5px;font-size:12.8px;line-height:12.8px;color:#cc2222;letter-spacing:0.32px">0,00</span>
<span class="a fm" style="left:1200.3px;top:224.5px;font-size:12.8px;line-height:12.8px;font-weight:700;color:#c41414;letter-spacing:1.82px">Z:</span>
<span class="a fm" style="left:1250.6px;top:224.5px;font-size:12.8px;line-height:12.8px;color:#cc2222;letter-spacing:0.32px">0,00</span>
<span class="a fs sx" style="left:1023.2px;top:258.7px;font-size:12.4px;line-height:12.4px;color:#1a1a1a;transform:scaleX(0.9500);">X</span>
<span class="a fs sx" style="left:7.5px;top:314.1px;font-size:11.6px;line-height:11.6px;color:#1a1a1a;transform:scaleX(0.9576);">Показывать в журнале:</span>
<span class="a fs sx" style="left:163.7px;top:314.1px;font-size:11.6px;line-height:11.6px;color:#1a1a1a;transform:scaleX(0.9388);">Команды</span>
<span class="a fs sx" style="left:251.0px;top:314.1px;font-size:11.6px;line-height:11.6px;color:#1a1a1a;transform:scaleX(0.8753);">Инфо</span>
<span class="a fs sx" style="left:320.5px;top:314.1px;font-size:11.6px;line-height:11.6px;color:#1a1a1a;transform:scaleX(0.9251);">Предупреждения</span>
<span class="a fs sx" style="left:447.5px;top:314.1px;font-size:11.6px;line-height:11.6px;color:#1a1a1a;transform:scaleX(0.9292);">Ошибки</span>
<span class="a fs sx" style="left:530.0px;top:314.1px;font-size:11.6px;line-height:11.6px;color:#1a1a1a;transform:scaleX(0.9254);">Подтверждение</span>
<span class="a fs sx" style="left:651.2px;top:314.1px;font-size:11.6px;line-height:11.6px;color:#1a1a1a;transform:scaleX(0.9462);">Автопрокрутка</span>
<span class="a fs sx" style="left:771.7px;top:314.1px;font-size:11.6px;line-height:11.6px;color:#1a1a1a;transform:scaleX(0.9326);">Очистить журнал</span>
<span class="a fs sx" style="left:904.2px;top:314.1px;font-size:11.6px;line-height:11.6px;color:#1a1a1a;transform:scaleX(0.9345);">Копировать</span>
<span class="a fs" style="left:4.6px;top:843.8px;font-size:12px;line-height:12px;color:#1a1a1a;letter-spacing:0.09px">Подключено: default</span>
<span class="a fs sx" style="left:518.7px;top:843.8px;font-size:12px;line-height:12px;color:#1a1a1a;transform:scaleX(0.9740);">Экструдер: 187,1°C/Откл. Панель: 73,5°C/Откл.</span>
<span class="a fs sx" style="left:1174.6px;top:843.8px;font-size:12px;line-height:12px;color:#1a1a1a;transform:scaleX(0.9987);">Готов</span>
<span class="a fs sx" style="left:1202.4px;top:871.8px;font-size:12px;line-height:12px;color:#eef2f8;transform:scaleX(0.9180);">RU</span>
<span class="a fs sx" style="left:1373.9px;top:867.3px;font-size:12.4px;line-height:12.4px;color:#fff;transform:scaleX(0.8644);">17:11</span>
<span class="a fs sx" style="left:1360.3px;top:884.3px;font-size:12.4px;line-height:12.4px;color:#fff;transform:scaleX(0.8483);">29.05.2017</span>
</body></html>
